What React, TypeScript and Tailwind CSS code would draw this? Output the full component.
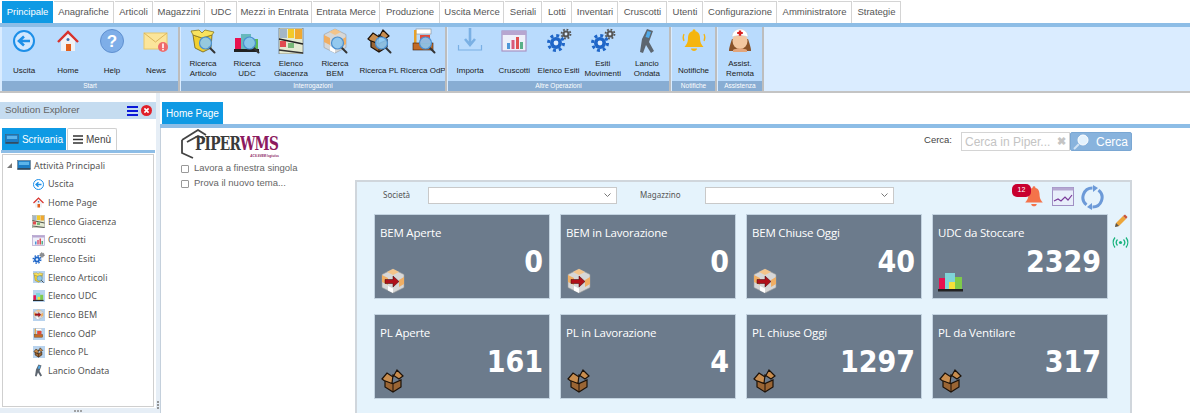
import React from "react";

const I = ({ s = 26, v = "0 0 26 26", children }: { s?: number; v?: string; children: React.ReactNode }) => (
  <svg width={s} height={s} viewBox={v} className="shrink-0 block">{children}</svg>
);

const Lens = () => (
  <>
    <path d="M19 19l5.500 5.500" stroke="#333" strokeWidth="2" strokeLinecap="round" />
    <circle cx="15.500" cy="15" r="6" fill="#8cc8f2" fillOpacity=".9" stroke="#4a8fd0" strokeWidth="1.200" />
  </>
);
const Back = ({ s = 26 }: { s?: number }) => (
  <I s={s}><circle cx="13" cy="13" r="10" fill="#fff" fillOpacity=".35" stroke="#1d8fe8" strokeWidth="2" /><path d="M19 13H9M13 8.500L8 13l5 4.500" fill="none" stroke="#1d8fe8" strokeWidth="2.600" /></I>
);
const Home = ({ s = 26 }: { s?: number }) => (
  <I s={s}><path d="M6 12v11h14V12l-7-6z" fill="#f1f1f4" /><path d="M3 14L13 4l10 10" fill="none" stroke="#d8322c" strokeWidth="2.400" /><rect x="11" y="16" width="5" height="7" fill="#e2601c" /><circle cx="13" cy="11.500" r="1.500" fill="#3a6fb0" /></I>
);
const Help = ({ s = 26 }: { s?: number }) => (
  <I s={s}><circle cx="13" cy="13" r="11.500" fill="#7eaee8" stroke="#5f90d0" /><text x="13" y="19" textAnchor="middle" fontSize="17" fontWeight="700" fill="#fff" fontFamily="Liberation Sans">?</text></I>
);
const Mail = () => (
  <I><rect x="1" y="5" width="23" height="16" fill="#fbe59a" stroke="#e8c76a" /><path d="M1 5l11.500 9L24 5" fill="none" stroke="#dcb65c" /><circle cx="20" cy="19" r="5" fill="#ee6a6a" /><rect x="19.200" y="15.500" width="1.600" height="4.500" fill="#fff" /><rect x="19.200" y="20.800" width="1.600" height="1.600" fill="#fff" /></I>
);
const BoxYellow = () => (
  <I><path d="M3 7l9 3 10-3-1 13-8 4-8-4z" fill="#f1cf2f" stroke="#6e5f18" strokeWidth=".8" /><path d="M3 7L1 3l8-1 3 3 3-3 9 2-2 3-10 3z" fill="#f8e25e" stroke="#8a7822" strokeWidth=".8" /><Lens /></I>
);
const Bars = ({ s = 26 }: { s?: number }) => (
  <I s={s}><rect x="1" y="10" width="9" height="11" fill="#e8104f" /><rect x="7" y="5" width="10" height="16" fill="#7fd4d8" /><rect x="11" y="14" width="6" height="7" fill="#f4e13a" /><rect x="17" y="9" width="7" height="12" fill="#7ecb4a" /><rect x="0" y="21" width="25" height="2.500" fill="#222" /></I>
);
const BarsSearch = () => (
  <I><rect x="1" y="10" width="9" height="11" fill="#e8104f" /><rect x="7" y="6" width="10" height="15" fill="#66b8bc" /><rect x="16" y="11" width="8" height="10" fill="#5dbb55" /><rect x="0" y="21" width="25" height="3" fill="#222" /><Lens /></I>
);
const Shelf = ({ s = 26 }: { s?: number }) => (
  <I s={s}><rect x="1" y="0" width="24" height="26" fill="#e4ead2" stroke="#555" strokeWidth=".6" /><rect x="2" y="1" width="7" height="9" fill="#a4b6c6" /><rect x="10" y="1" width="6" height="9" fill="#f3c92a" /><rect x="17" y="1" width="7" height="10" fill="#f0a830" /><path d="M1 11l24 5" stroke="#222" strokeWidth="1.500" /><rect x="2" y="13" width="6" height="6" fill="#e04b50" /><rect x="10" y="15" width="6" height="5" fill="#78b878" /><path d="M1 22l24 3" stroke="#333" strokeWidth="1.500" /></I>
);
const Cube = ({ s = 26, arrow = true, lens = false }: { s?: number; arrow?: boolean; lens?: boolean }) => (
  <I s={s}><path d="M13 1l11 5.500v13L13 25 2 19.500v-13z" fill="#d7d7d7" stroke="#9a9a9a" strokeWidth=".6" /><path d="M13 1L7 4l6 3 6-3z" fill="#f3c48a" /><path d="M2 7l6 3v7l-6-3z" fill="#f0ae63" /><path d="M19 12l5-3v7l-5 3z" fill="#f0ae63" /><path d="M8 18l5 2.500V25l-5-2.500z" fill="#fff" />{arrow && <path d="M5 11.500h8V8l6 5.500-6 5.500v-3.500H5z" fill="#b0101a" stroke="#3a0508" strokeWidth=".5" />}{lens && <Lens />}</I>
);
const BoxBrown = ({ s = 26, lens = false }: { s?: number; lens?: boolean }) => (
  <I s={s}><path d="M5 12l8 3.500 8-3.500v7l-8 5-8-5z" fill="#9a6534" stroke="#1c1108" strokeWidth="1.200" /><path d="M13 15.500V24" stroke="#1c1108" /><path d="M2 11l5-6 6 4 4-7 6 6-4 3-6-4-1 8.500-8-3z" fill="#c98d4e" stroke="#1c1108" strokeWidth="1.200" />{lens && <Lens />}</I>
);
const Odp = ({ s = 26, lens = true }: { s?: number; lens?: boolean }) => (
  <I s={s}><rect x="6" y="1" width="15" height="5" fill="#fff" stroke="#777" strokeWidth=".5" /><rect x="4" y="2" width="2.500" height="17" fill="#e7a12a" /><rect x="3" y="15" width="20" height="7" fill="#c26a26" stroke="#3a1d08" strokeWidth=".6" /><rect x="10" y="7" width="10" height="8" fill="#e14b3a" />{lens && <Lens />}</I>
);
const Import = () => (
  <I><path d="M13 0v16M8 11l5 6 5-6" fill="none" stroke="#7ab0e4" strokeWidth="2.600" /><path d="M1.500 17v5h23v-5" fill="none" stroke="#7ab0e4" strokeWidth="1.200" /></I>
);
const Dash = ({ s = 26 }: { s?: number }) => (
  <I s={s}><rect x="1" y="3" width="24" height="20" fill="#eef0fa" stroke="#a993c4" strokeWidth="1.200" /><rect x="1" y="3" width="24" height="4" fill="#b7a6d0" /><rect x="6" y="15" width="3" height="6" fill="#4f97d8" /><rect x="10.500" y="12" width="3" height="9" fill="#d95a7a" /><rect x="15" y="9" width="3" height="12" fill="#e05050" /><rect x="19" y="14" width="3" height="7" fill="#58b088" /></I>
);
const Gear = ({ x, y, r, c }: { x: number; y: number; r: number; c: string }) => {
  const seg = (2 * Math.PI * r) / 16;
  return (
    <g>
      <circle cx={x} cy={y} r={r} fill="none" stroke={c} strokeWidth={r * 0.4} strokeDasharray={`${seg} ${seg}`} />
      <circle cx={x} cy={y} r={r * 0.8} fill={c} />
      <circle cx={x} cy={y} r={r * 0.32} fill="#dcecff" />
    </g>
  );
};
const Gears = ({ s = 26 }: { s?: number }) => (
  <I s={s}><Gear x={10} y={15} r={7.500} c="#1f66c8" /><Gear x={20} y={6} r={4.500} c="#555" /></I>
);
const Scanner = ({ s = 26 }: { s?: number }) => (
  <I s={s}><path d="M13 1l6 2-4 11 5 9-3 2-5-8-3 8-3-1 2-13z" fill="#5d6670" /><path d="M13.500 3l3.500 1-2 6-3.500-1z" fill="#4fa9e8" /></I>
);
const Bell = ({ c = "#f5b50f", s = 26, waves = true }: { c?: string; s?: number; waves?: boolean }) => (
  <I s={s}><path d="M13 3c-4 0-6 3-6 7 0 5-2 7-3.500 9h19C21 17 19 15 19 10c0-4-2-7-6-7z" fill={c} /><circle cx="13" cy="2.800" r="1.500" fill={c} /><path d="M10 20.500h6c0 1.500-1.500 2.500-3 2.500s-3-1-3-2.500z" fill={c} />{waves && <path d="M3 6c-1 2-1 5 0 7M23 6c1 2 1 5 0 7" fill="none" stroke={c} strokeWidth="1.200" />}</I>
);
const Nurse = () => (
  <I><path d="M5 11c-2 6-3 9-3 12h22c0-3-1-6-3-12z" fill="#8a5228" /><ellipse cx="13" cy="13" rx="7.500" ry="8" fill="#f3c7a0" /><path d="M5 9c0-5 4-8 8-8s8 3 8 8c-5-2-11-2-16 0z" fill="#fff" stroke="#c9c9c9" strokeWidth=".5" /><path d="M11.800 2.500h2.400v1.600h1.600v2h-1.600v1.600h-2.400V6.100h-1.600v-2h1.600z" fill="#d82020" /><path d="M6 22c2-2 12-2 14 0v2H6z" fill="#e2a67d" /></I>
);
const Desk = ({ s = 22 }: { s?: number }) => (
  <I s={s} v="0 0 22 22"><rect x="1" y="4" width="20" height="14" fill="#1c7cc4" stroke="#4a5a6a" strokeWidth=".8" /><rect x="3" y="6" width="16" height="5" fill="#5cb4ea" /><rect x="1" y="16" width="20" height="2" fill="#35424f" /></I>
);
const Menu3 = () => (
  <svg width="11" height="10" viewBox="0 0 11 10" className="shrink-0"><path d="M0 1h11M0 5h11M0 9h11" stroke="#0a18d8" strokeWidth="1.800" /></svg>
);
const Close = () => (
  <svg width="11" height="11" viewBox="0 0 11 11" className="shrink-0"><circle cx="5.500" cy="5.500" r="5.500" fill="#e0202a" /><path d="M3.400 3.400l4.200 4.200M7.600 3.400L3.400 7.600" stroke="#fff" strokeWidth="1.600" /></svg>
);

const tabs: [string, number][] = [
  ["Principale", 51], ["Anagrafiche", 60], ["Articoli", 38], ["Magazzini", 51], ["UDC", 31], ["Mezzi in Entrata", 74],
  ["Entrata Merce", 67], ["Produzione", 59], ["Uscita Merce", 63], ["Seriali", 37], ["Lotti", 29], ["Inventari", 45],
  ["Cruscotti", 48], ["Utenti", 35], ["Configurazione", 73], ["Amministratore", 74], ["Strategie", 48],
];

const groups: { label: string; w: number; items: { t: React.ReactNode; i: React.ReactNode }[] }[] = [
  { label: "Start", w: 178, items: [
    { t: "Uscita", i: <Back /> }, { t: "Home", i: <Home /> }, { t: "Help", i: <Help /> }, { t: "News", i: <Mail /> },
  ] },
  { label: "Interrogazioni", w: 266, items: [
    { t: <>Ricerca<br />Articolo</>, i: <BoxYellow /> }, { t: <>Ricerca<br />UDC</>, i: <BarsSearch /> },
    { t: <>Elenco<br />Giacenza</>, i: <Shelf /> }, { t: <>Ricerca<br />BEM</>, i: <Cube arrow={false} lens /> },
    { t: "Ricerca PL", i: <BoxBrown lens /> }, { t: "Ricerca OdP", i: <Odp /> },
  ] },
  { label: "Altre Operazioni", w: 223, items: [
    { t: "Importa", i: <Import /> }, { t: "Cruscotti", i: <Dash /> }, { t: "Elenco Esiti", i: <Gears /> },
    { t: <>Esiti<br />Movimenti</>, i: <Gears /> }, { t: <>Lancio<br />Ondata</>, i: <Scanner /> },
  ] },
  { label: "Notifiche", w: 45, items: [{ t: "Notifiche", i: <Bell /> }] },
  { label: "Assistenza", w: 46, items: [{ t: <>Assist.<br />Remota</>, i: <Nurse /> }] },
];

function Tile({ children }: { children: React.ReactNode }) {
  return <span className="w-[12px] h-[12px] bg-[#b8d3ee] flex items-center justify-center overflow-hidden [&_svg]:w-[11px] [&_svg]:h-[11px]">{children}</span>;
}

const tree: [string, React.ReactNode][] = [
  ["Uscita", <Back s={13} />], ["Home Page", <Home s={13} />], ["Elenco Giacenza", <Shelf s={13} />], ["Cruscotti", <Dash s={13} />],
  ["Elenco Esiti", <Gears s={13} />], ["Elenco Articoli", <Tile><BoxYellow /></Tile>], ["Elenco UDC", <Tile><Bars s={11} /></Tile>],
  ["Elenco BEM", <Tile><Cube s={11} /></Tile>], ["Elenco OdP", <Tile><Odp s={11} lens={false} /></Tile>], ["Elenco PL", <Tile><BoxBrown s={11} /></Tile>],
  ["Lancio Ondata", <Scanner s={13} />],
];

const cards: [string, string, React.ReactNode][] = [
  ["BEM Aperte", "0", <Cube />], ["BEM in Lavorazione", "0", <Cube />], ["BEM Chiuse Oggi", "40", <Cube />], ["UDC da Stoccare", "2329", <Bars />],
  ["PL Aperte", "161", <BoxBrown />], ["PL in Lavorazione", "4", <BoxBrown />], ["PL chiuse Oggi", "1297", <BoxBrown />], ["PL da Ventilare", "317", <BoxBrown />],
];

const Select = () => (
  <div className="w-[189px] h-[17px] bg-white border border-[#c9c9c9] flex items-center justify-end pr-[5px] shrink-0">
    <svg width="7" height="5" viewBox="0 0 7 5"><path d="M.5.500l3 3 3-3" fill="none" stroke="#777" /></svg>
  </div>
);

const Check = ({ t }: { t: string }) => (
  <div className="h-[15px] flex items-center gap-[5px] text-[9.500px] text-[#666] font-['Liberation_Sans',sans-serif]">
    <span className="w-[8px] h-[8px] border border-[#999] rounded-[1px] bg-white" />
    {t}
  </div>
);

export default function App() {
  return (
    <div className="w-[1190px] h-[413px] overflow-hidden bg-white flex flex-col font-['Liberation_Sans',sans-serif]">
      <div className="h-[23px] flex items-end pl-[2px] shrink-0 bg-white">
        {tabs.map(([t, w], i) => (
          <div
            key={t}
            style={{ width: w }}
            className={
              "h-[22px] flex items-center justify-center text-[9.500px] mr-px shrink-0 " +
              (i === 0 ? "bg-[#0f9ae4] text-white" : "bg-white text-[#555] border-t border-r border-[#d4d4d4]")
            }
          >
            {t}
          </div>
        ))}
      </div>
      <div className="h-[4px] bg-[#8dbde6] shrink-0" />
      <div className="h-[66px] shrink-0 bg-[#daecff] flex pl-[2px] border-b-2 border-[#c4c4c4]">
        {groups.map((g) => (
          <div key={g.label} style={{ width: g.w }} className="h-full flex flex-col border-r-2 border-[#bdbdbd] mr-px shrink-0 bg-[#b9dbfd] overflow-hidden">
            <div className="flex-1 flex min-h-0">
              {g.items.map((it, i) => (
                <div key={i} className="flex-1 min-w-0 flex flex-col items-center">
                  <div className="h-[26px] mt-[1px] flex items-center justify-center shrink-0">{it.i}</div>
                  <div className={"flex-1 flex items-center justify-center text-center text-[8px] leading-[10px] text-[#222] whitespace-nowrap " + (typeof it.t === "string" ? "pt-[7px]" : "pt-[3px]")}>
                    <span>{it.t}</span>
                  </div>
                </div>
              ))}
            </div>
            <div className="h-[10px] bg-[#88add3] text-white text-[6.500px] leading-[10px] text-center shrink-0">{g.label}</div>
          </div>
        ))}
      </div>

      <div className="flex-1 min-h-0 flex">
        <div className="w-[156px] shrink-0 flex flex-col pt-[9px]">
          <div className="h-[17px] bg-[#c5dcf0] flex items-center justify-between pl-[5px] pr-[4px] text-[9.800px] text-[#666] shrink-0">
            <span>Solution Explorer</span>
            <span className="flex items-center gap-[3px]"><Menu3 /><Close /></span>
          </div>
          <div className="h-[31px] pt-[9px] flex pl-[2px] gap-px shrink-0">
            <div className="w-[64px] bg-[#0f9ae4] text-white text-[10px] flex items-center justify-center gap-[3px]">
              <Desk s={14} />Scrivania
            </div>
            <div className="w-[50px] bg-white border border-b-0 border-[#d0d0d0] text-[10px] text-[#444] flex items-center justify-center gap-[3px] rounded-t-[2px]">
              <svg width="10" height="9" viewBox="0 0 10 9"><path d="M0 1h10M0 4.500h10M0 8h10" stroke="#333" strokeWidth="1.400" /></svg>
              Menù
            </div>
          </div>
          <div className="h-[3px] bg-[#8dbde6] mx-[1px] shrink-0" />
          <div className="h-[253px] mx-[2px] mt-px border border-[#cfcfcf] pt-[1px] shrink-0 font-['Noto_Sans',sans-serif] text-[9px] text-[#555]">
            <div className="h-[18.700px] flex items-center pl-[3px]">
              <svg width="7" height="7" viewBox="0 0 7 7" className="mr-[4px]"><path d="M6 1v5H1z" fill="#777" /></svg>
              <Desk s={14} />
              <span className="ml-[3px]">Attività Principali</span>
            </div>
            {tree.map(([t, ic]) => (
              <div key={t} className="h-[18.700px] flex items-center pl-[29px]">
                <span className="w-[13px] h-[13px] flex items-center justify-center shrink-0">{ic}</span>
                <span className="ml-[3px]">{t}</span>
              </div>
            ))}
          </div>
          <div className="flex-1 bg-[#e6eef6] mt-[1px] flex justify-center items-center gap-[1px]">
            <i className="w-[2px] h-[2px] rounded-full bg-[#888]" /><i className="w-[2px] h-[2px] rounded-full bg-[#888]" /><i className="w-[2px] h-[2px] rounded-full bg-[#888]" />
          </div>
        </div>

        <div className="w-[4px] shrink-0 bg-[#e6eef6] flex flex-col items-center justify-end gap-[1px] pb-[4px]">
          <i className="w-[2px] h-[2px] rounded-full bg-[#777]" /><i className="w-[2px] h-[2px] rounded-full bg-[#777]" /><i className="w-[2px] h-[2px] rounded-full bg-[#777]" />
        </div>

        <div className="flex-1 min-w-0 flex flex-col pt-[9px]">
          <div className="h-[22px] pl-[2px] shrink-0">
            <div className="w-[61px] h-full bg-[#0f9ae4] text-white text-[10px] flex items-center justify-center">Home Page</div>
          </div>
          <div className="h-[4px] bg-[#8dbde6] shrink-0" />
          <div className="flex-1 min-h-0 flex border-l border-[#c4d0dc]">
            <div className="w-[194px] shrink-0 pl-[20px] pt-px">
              <div className="flex items-start h-[31px]">
                <svg width="26" height="30" viewBox="0 0 26 30" className="shrink-0">
                  <path d="M1 11l16-10 8 5M1 11v13l11 5" fill="none" stroke="#444" strokeWidth="1.800" />
                  <path d="M6 13l11-6 7 3" fill="none" stroke="#444" strokeWidth="1.800" />
                </svg>
                <div className="ml-[-12px] pt-[3px]">
                  <div className="font-['DejaVu_Serif',serif] font-bold text-[19px] leading-[22px] tracking-[-1px] scale-x-[.72] origin-left w-[84px] whitespace-nowrap">
                    <span className="text-[#3a3a3a]">PIPER</span><span className="text-[#8c1a5f]">WMS</span>
                  </div>
                  <div className="text-[3px] italic font-bold text-[#8c1a5f] text-right leading-[4px] w-[84px]">ACS.SVEM logistics</div>
                </div>
              </div>
              <div className="mt-[1px]"><Check t="Lavora a finestra singola" /><Check t="Prova il nuovo tema..." /></div>
            </div>

            <div className="w-[777px] shrink-0 flex flex-col">
              <div className="h-[52px] shrink-0 flex justify-end items-start pt-[4px]">
                <span className="text-[9.500px] text-[#444] mr-[9px] mt-[1px]">Cerca:</span>
                <div className="w-[109px] h-[19px] border border-[#d4d4d4] bg-white flex items-center justify-between px-[3px] text-[12px] text-[#c4c4c4]">
                  <span>Cerca in Piper...</span><span className="text-[11px] font-bold">✖</span>
                </div>
                <div className="w-[62px] h-[19px] bg-[#88b3dd] border border-[#7aa7d3] rounded-[2px] flex items-center text-[12px] text-white pl-[2px]">
                  <svg width="16" height="16" viewBox="0 0 16 16" className="mr-[7px]"><circle cx="10" cy="6" r="5" fill="#e4f2fd" stroke="#fff" /><path d="M6 10l-5 5" stroke="#cfe2f4" strokeWidth="2" /></svg>
                  Cerca
                </div>
              </div>
              <div className="flex-1 bg-[#e5f3fc] border-2 border-b-0 border-[#d0d6dc] pl-[17px] pr-[2px] pt-px">
                <div className="h-[31px] flex items-start">
                  <div className="flex items-center h-[24px] text-[8px] text-[#555] font-['Noto_Sans',sans-serif] w-[640px] shrink-0">
                    <span className="w-[54px] pl-[9px] shrink-0">Società</span>
                    <Select />
                    <span className="w-[65px] pl-[23px] mr-[23px] whitespace-nowrap shrink-0">Magazzino</span>
                    <Select />
                  </div>
                  <div className="flex items-center ml-[11px] h-[28px]">
                    <div className="relative w-[21px] flex justify-end">
                      <Bell c="#f4734a" s={24} waves={false} />
                      <div className="absolute left-[-13px] top-[-1px] w-[19px] h-[13px] rounded-[5px] bg-[#c8002f] text-white text-[7px] flex items-center justify-center">12</div>
                    </div>
                    <div className="ml-[6px]"><svg width="22" height="20" viewBox="0 0 22 20"><rect x=".5" y=".5" width="21" height="18" fill="#e8eefa" stroke="#a090c4" /><rect x=".5" y=".5" width="21" height="3" fill="#b5a8d2" /><path d="M2 14l4-2 3 2 4-4 3 3 4-5" fill="none" stroke="#7a3a9a" strokeWidth="1.200" /></svg></div>
                    <div className="ml-[6px]"><svg width="25" height="25" viewBox="0 0 25 25"><path d="M12.500 3a9.500 9.500 0 0 0-6 16.900M12.500 22a9.500 9.500 0 0 0 6-16.900" fill="none" stroke="#6c9ad8" strokeWidth="3" /><path d="M13 0v7l5-4zM12 25v-7l-5 4z" fill="#6c9ad8" /></svg></div>
                  </div>
                </div>
                <div className="flex">
                  <div className="grid grid-cols-4 gap-x-[10px] gap-y-[15px] w-[734px] shrink-0">
                    {cards.map(([t, n, ic]) => (
                      <div key={t} className="h-[85px] bg-[#6c7b8c] border border-[#c3d3e0] pl-[5px] pr-[6px] flex flex-col font-['Open_Sans',sans-serif]">
                        <div className="text-[11.500px] text-white mt-[10px] leading-[16px] tracking-[-.2px] shrink-0">{t}</div>
                        <div className="text-right font-['DejaVu_Sans',sans-serif] [font-stretch:condensed] font-bold text-white text-[30px] leading-[24px] mt-[9px] shrink-0">{n}</div>
                        <div className="mt-[-6px] shrink-0">{ic}</div>
                      </div>
                    ))}
                  </div>
                  <div className="flex flex-col items-center pl-[4px]">
                    <svg width="14" height="14" viewBox="0 0 14 14"><path d="M1 13l1-4 7-7 3 3-7 7z" fill="#eda63a" /><path d="M9 2l2-1.500L13.500 3 12 5z" fill="#c9573a" /><path d="M1 13l1-4 3 3z" fill="#555" /></svg>
                    <svg width="17" height="13" viewBox="0 0 17 13" className="mt-[8px]"><circle cx="8.500" cy="6.500" r="1.600" fill="#19b37e" /><path d="M5.500 3.500a4.500 4.500 0 0 0 0 6M11.500 3.500a4.500 4.500 0 0 1 0 6M3 1.500a8 8 0 0 0 0 10M14 1.500a8 8 0 0 1 0 10" fill="none" stroke="#19b37e" strokeWidth="1.300" /></svg>
                  </div>
                </div>
              </div>
            </div>
          </div>
        </div>
      </div>
    </div>
  );
}
